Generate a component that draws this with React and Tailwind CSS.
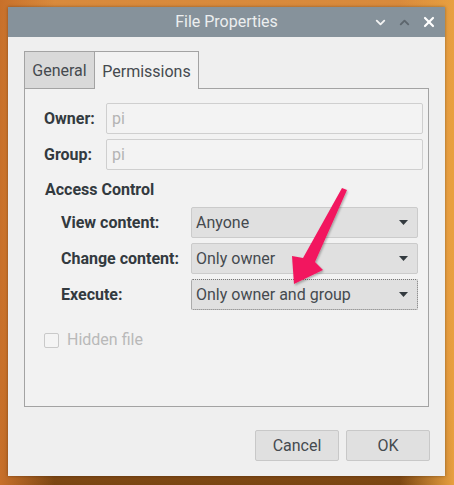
import { ChevronDown, ChevronUp, X } from "lucide-react";

function Field({ label, value }) {
	return (
		<div className="flex items-center h-[31px]">
			<div className="w-[81px] shrink-0 pl-[19px] font-bold text-[#333a3f]">{label}</div>
			<div className="w-[317px] shrink-0 h-[31px] border border-[#cfcfcf] bg-[#f3f3f3] rounded-[2px] flex items-center px-[5px] text-[#b4b4b4]">
				{value}
			</div>
		</div>
	);
}

function Select({ label, value, focused }) {
	return (
		<div className="flex items-center h-[31px]">
			<div className="w-[166px] shrink-0 pl-[36px] font-bold text-[#333a3f]">{label}</div>
			<div
				className={
					"w-[227px] shrink-0 h-[31px] bg-[#e0e0e0] rounded-[2px] flex items-center justify-between pl-[4px] pr-[9px] text-[#454a4f] " +
					(focused ? "border border-dotted border-[#777]" : "border border-[#cbcbcb]")
				}
			>
				<span>{value}</span>
				<svg width="9" height="5" viewBox="0 0 9 5">
					<polygon points="0,0 9,0 4.5,5" fill="#333a3f" />
				</svg>
			</div>
		</div>
	);
}

export default function App() {
	return (
		<div
			className="relative w-[454px] h-[485px] overflow-hidden text-[16px] bg-[linear-gradient(180deg,#d98a3c_0%,#e9963e_45%,#d07a2a_75%,#7a4512_100%)]"
			style={{ fontFamily: "Roboto, 'Liberation Sans', sans-serif" }}
		>
			<div className="absolute inset-0 bg-[linear-gradient(90deg,#c8702a_0%,rgba(0,0,0,0)_12%,rgba(0,0,0,0)_88%,#e8a040_100%)]" />
			<div className="relative ml-[8px] pt-[7px] w-[437px]">
				<div className="flex flex-col h-[469px] bg-[#efefef] shadow-[0_0_3px_rgba(0,0,0,0.35)]">
					{/* title bar */}
					<div className="relative h-[30px] bg-[#86929b] flex items-center justify-center text-[16px] text-[#eceeef]">
						File Properties
						<div className="absolute right-[8px] top-0 h-[30px] flex items-center gap-[9px]">
							<ChevronDown size={15} strokeWidth={3} color="#f2f2f2" />
							<ChevronUp size={15} strokeWidth={3} color="#5d666d" />
							<X size={16} strokeWidth={3.2} color="#ffffff" />
						</div>
					</div>

					<div className="px-[16px] pt-[14px]">
						{/* tabs */}
						<div className="flex h-[37px] relative z-10">
							<div className="w-[71px] h-[37px] pt-[2px] border border-[#a3a3a3] border-b-0 bg-[#d9d9d9] flex items-center justify-center text-[#454a4f]">
								General
							</div>
							<div className="w-[104px] h-[38px] pt-[2px] border border-[#a3a3a3] border-l-0 border-b-0 bg-[#f2f2f2] flex items-center justify-center text-[#454a4f]">
								Permissions
							</div>
						</div>
						{/* panel */}
						<div className="h-[319px] w-[405px] border border-[#a3a3a3] bg-[#f2f2f2] pt-[14px] flex flex-col">
							<div className="flex flex-col gap-[5px]">
								<Field label="Owner:" value="pi" />
								<Field label="Group:" value="pi" />
							</div>
							<div className="pl-[20px] mt-[5px] h-[30px] flex items-center font-bold text-[#333a3f] text-[16px]">
								Access Control
							</div>
							<div className="flex flex-col gap-[5px] mt-[2px]">
								<Select label="View content:" value="Anyone" />
								<Select label="Change content:" value="Only owner" />
								<Select label="Execute:" value="Only owner and group" focused />
							</div>
							<div className="flex items-center mt-[15px] pl-[19px] h-[30px] text-[#b9b9b9]">
								<div className="w-[15px] h-[15px] border border-[#c9c9c9] rounded-[2px] bg-[#f4f4f4] mr-[8px]" />
								Hidden file
							</div>
						</div>
						{/* buttons */}
						<div className="flex justify-end gap-[7px] mt-[23px]">
							<div className="w-[84px] h-[31px] bg-[#e0e0e0] border border-[#c8c8c8] rounded-[2px] flex items-center justify-center text-[#454a4f]">
								Cancel
							</div>
							<div className="w-[84px] h-[31px] bg-[#e0e0e0] border border-[#c8c8c8] rounded-[2px] flex items-center justify-center text-[#454a4f] mr-[-1px]">
								OK
							</div>
						</div>
					</div>
				</div>
			</div>

			{/* annotation arrow */}
			<svg className="absolute left-0 top-0 pointer-events-none" width="454" height="485">
				<defs>
					<filter id="sh" x="-20%" y="-20%" width="140%" height="140%">
						<feDropShadow dx="1" dy="1.5" stdDeviation="1.2" floodColor="#000" floodOpacity="0.3" />
					</filter>
				</defs>
				<polygon
					points="342,188 347,190 315,262 323,270 294,284 292,256 303,258"
					fill="#f2195f"
					filter="url(#sh)"
				/>
			</svg>
		</div>
	);
}
